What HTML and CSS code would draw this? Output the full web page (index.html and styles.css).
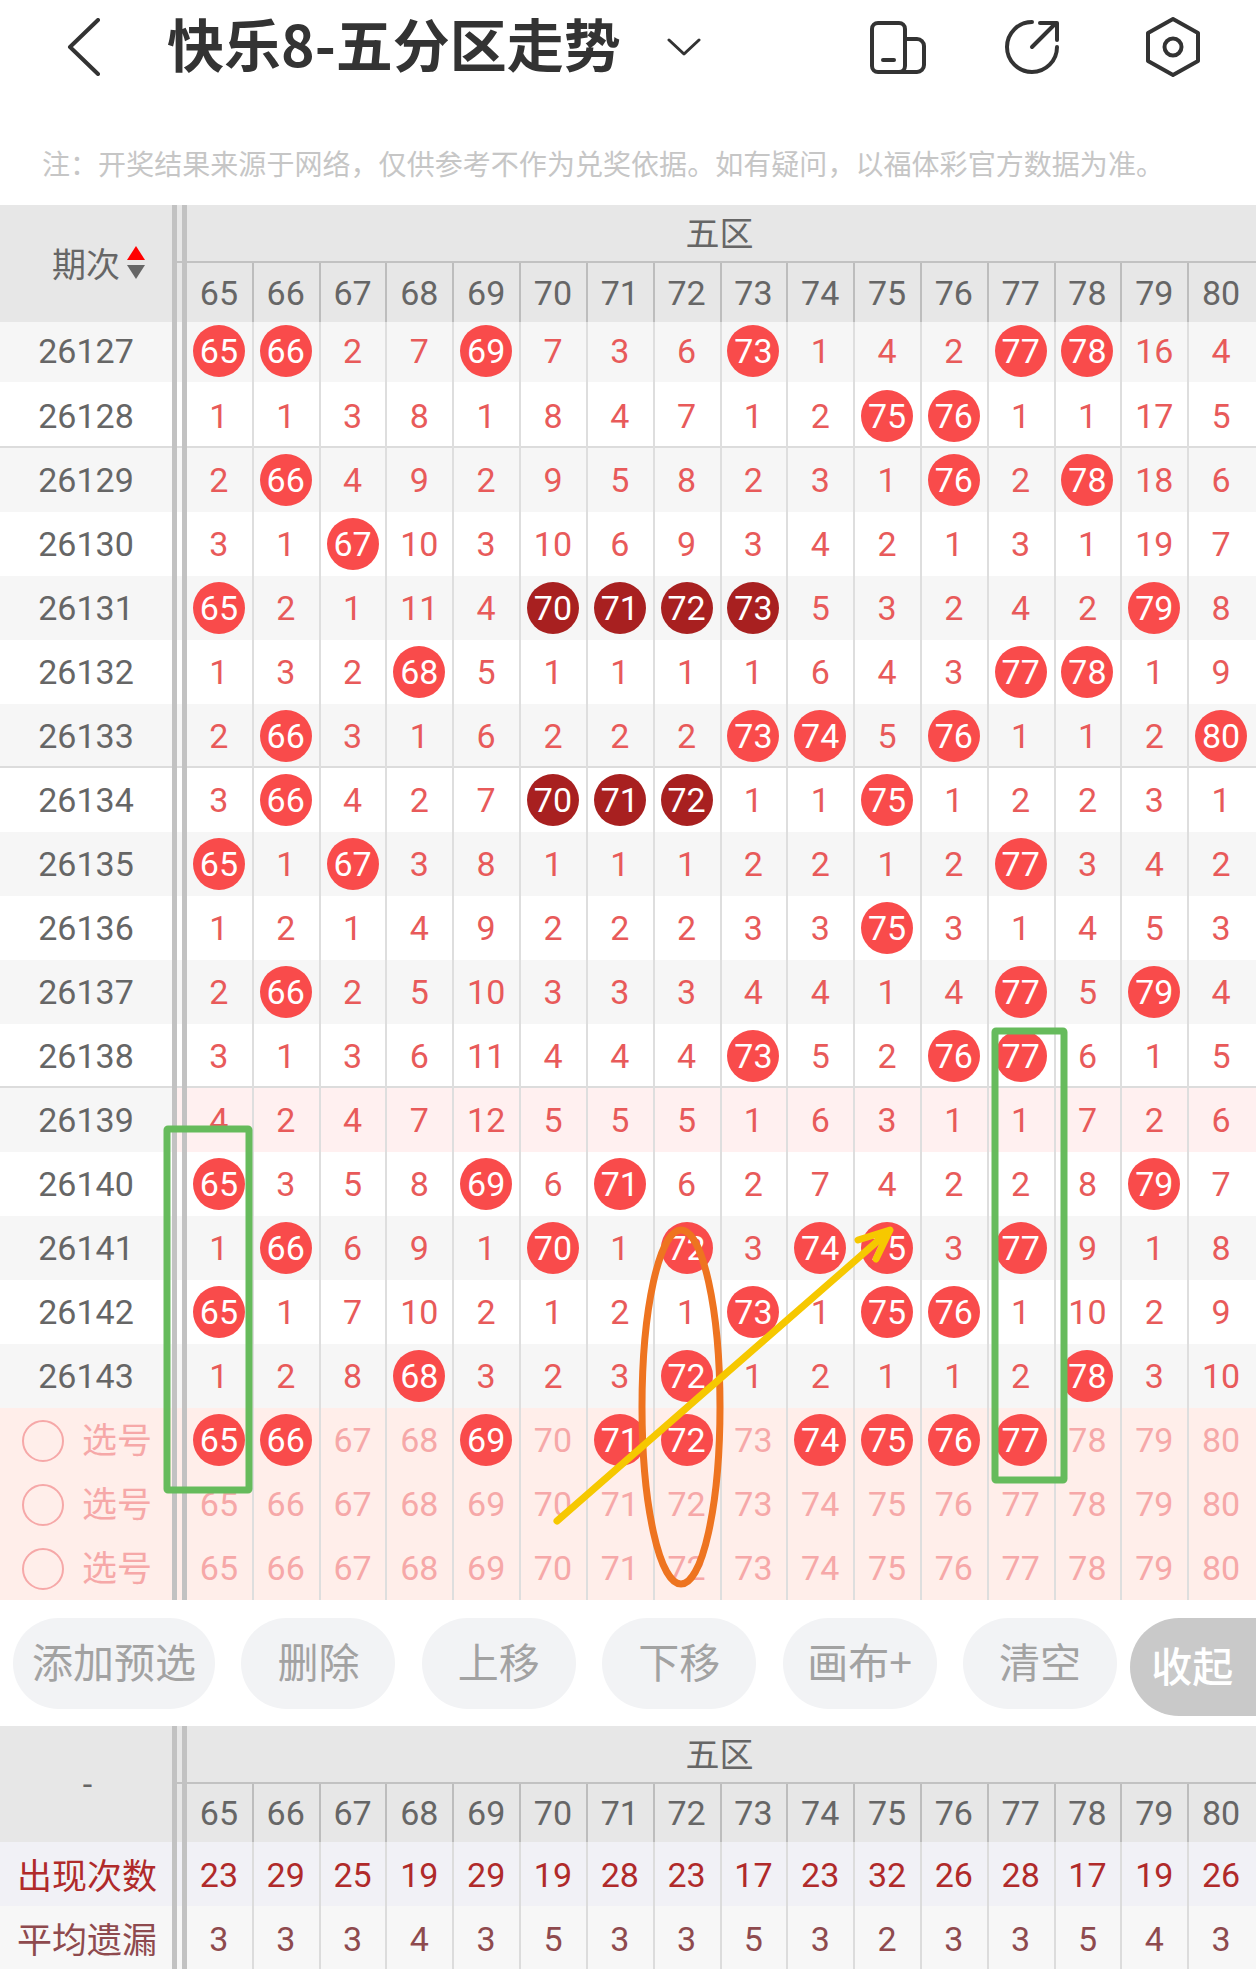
FILE: index.html
```html
<!DOCTYPE html>
<html lang="zh-CN">
<head>
<meta charset="utf-8">
<title>快乐8-五分区走势</title>
<link rel="stylesheet" href="styles.css">
</head>
<body>
<div class="page">
  <header class="top">
    <svg class="back" viewBox="0 0 34 58"><path d="M31 2 3 29l28 27"/></svg>
    <h1>快乐8-五分区走势</h1>
    <svg class="caret" viewBox="0 0 34 18"><path d="M2 2l15 14L32 2"/></svg>
    <div class="tools">
      <svg class="tool t1" viewBox="0 0 56 54"><rect x="2" y="3" width="33" height="49" rx="6"/><path d="M35 19h12a7 7 0 0 1 7 7v19a7 7 0 0 1-7 7H29"/><path d="M13 40h11"/></svg>
      <svg class="tool t2" viewBox="0 0 56 56"><path d="M28 3a25 25 0 1 0 25 25"/><path d="M28 28 52 4M36 4h17v17"/></svg>
      <svg class="tool t3" viewBox="0 0 56 60"><path d="M28 2 53 16v28L28 58 3 44V16z"/><circle cx="28" cy="30" r="8.5"/></svg>
    </div>
  </header>
  <p class="note">注：开奖结果来源于网络，仅供参考不作为兑奖依据。如有疑问，以福体彩官方数据为准。</p>

  <section class="table">
    <div class="thead tall">
      <div class="corner sorted">期次<span class="sort"><i class="up"></i><i class="down"></i></span></div>
      <div class="zone">五区</div>
      <span>65</span><span>66</span><span>67</span><span>68</span><span>69</span><span>70</span><span>71</span><span>72</span><span>73</span><span>74</span><span>75</span><span>76</span><span>77</span><span>78</span><span>79</span><span>80</span>
    </div>
    <div class="row grey first"><div class="id">26127</div><span><b>65</b></span><span><b>66</b></span><span>2</span><span>7</span><span><b>69</b></span><span>7</span><span>3</span><span>6</span><span><b>73</b></span><span>1</span><span>4</span><span>2</span><span><b>77</b></span><span><b>78</b></span><span>16</span><span>4</span></div>
    <div class="row sep second"><div class="id">26128</div><span>1</span><span>1</span><span>3</span><span>8</span><span>1</span><span>8</span><span>4</span><span>7</span><span>1</span><span>2</span><span><b>75</b></span><span><b>76</b></span><span>1</span><span>1</span><span>17</span><span>5</span></div>
    <div class="row grey"><div class="id">26129</div><span>2</span><span><b>66</b></span><span>4</span><span>9</span><span>2</span><span>9</span><span>5</span><span>8</span><span>2</span><span>3</span><span>1</span><span><b>76</b></span><span>2</span><span><b>78</b></span><span>18</span><span>6</span></div>
    <div class="row"><div class="id">26130</div><span>3</span><span>1</span><span><b>67</b></span><span>10</span><span>3</span><span>10</span><span>6</span><span>9</span><span>3</span><span>4</span><span>2</span><span>1</span><span>3</span><span>1</span><span>19</span><span>7</span></div>
    <div class="row grey"><div class="id">26131</div><span><b>65</b></span><span>2</span><span>1</span><span>11</span><span>4</span><span><b class="dark">70</b></span><span><b class="dark">71</b></span><span><b class="dark">72</b></span><span><b class="dark">73</b></span><span>5</span><span>3</span><span>2</span><span>4</span><span>2</span><span><b>79</b></span><span>8</span></div>
    <div class="row"><div class="id">26132</div><span>1</span><span>3</span><span>2</span><span><b>68</b></span><span>5</span><span>1</span><span>1</span><span>1</span><span>1</span><span>6</span><span>4</span><span>3</span><span><b>77</b></span><span><b>78</b></span><span>1</span><span>9</span></div>
    <div class="row grey sep"><div class="id">26133</div><span>2</span><span><b>66</b></span><span>3</span><span>1</span><span>6</span><span>2</span><span>2</span><span>2</span><span><b>73</b></span><span><b>74</b></span><span>5</span><span><b>76</b></span><span>1</span><span>1</span><span>2</span><span><b>80</b></span></div>
    <div class="row"><div class="id">26134</div><span>3</span><span><b>66</b></span><span>4</span><span>2</span><span>7</span><span><b class="dark">70</b></span><span><b class="dark">71</b></span><span><b class="dark">72</b></span><span>1</span><span>1</span><span><b>75</b></span><span>1</span><span>2</span><span>2</span><span>3</span><span>1</span></div>
    <div class="row grey"><div class="id">26135</div><span><b>65</b></span><span>1</span><span><b>67</b></span><span>3</span><span>8</span><span>1</span><span>1</span><span>1</span><span>2</span><span>2</span><span>1</span><span>2</span><span><b>77</b></span><span>3</span><span>4</span><span>2</span></div>
    <div class="row"><div class="id">26136</div><span>1</span><span>2</span><span>1</span><span>4</span><span>9</span><span>2</span><span>2</span><span>2</span><span>3</span><span>3</span><span><b>75</b></span><span>3</span><span>1</span><span>4</span><span>5</span><span>3</span></div>
    <div class="row grey"><div class="id">26137</div><span>2</span><span><b>66</b></span><span>2</span><span>5</span><span>10</span><span>3</span><span>3</span><span>3</span><span>4</span><span>4</span><span>1</span><span>4</span><span><b>77</b></span><span>5</span><span><b>79</b></span><span>4</span></div>
    <div class="row sep"><div class="id">26138</div><span>3</span><span>1</span><span>3</span><span>6</span><span>11</span><span>4</span><span>4</span><span>4</span><span><b>73</b></span><span>5</span><span>2</span><span><b>76</b></span><span><b>77</b></span><span>6</span><span>1</span><span>5</span></div>
    <div class="row pink"><div class="id">26139</div><span>4</span><span>2</span><span>4</span><span>7</span><span>12</span><span>5</span><span>5</span><span>5</span><span>1</span><span>6</span><span>3</span><span>1</span><span>1</span><span>7</span><span>2</span><span>6</span></div>
    <div class="row"><div class="id">26140</div><span><b>65</b></span><span>3</span><span>5</span><span>8</span><span><b>69</b></span><span>6</span><span><b>71</b></span><span>6</span><span>2</span><span>7</span><span>4</span><span>2</span><span>2</span><span>8</span><span><b>79</b></span><span>7</span></div>
    <div class="row grey"><div class="id">26141</div><span>1</span><span><b>66</b></span><span>6</span><span>9</span><span>1</span><span><b>70</b></span><span>1</span><span><b>72</b></span><span>3</span><span><b>74</b></span><span><b>75</b></span><span>3</span><span><b>77</b></span><span>9</span><span>1</span><span>8</span></div>
    <div class="row"><div class="id">26142</div><span><b>65</b></span><span>1</span><span>7</span><span>10</span><span>2</span><span>1</span><span>2</span><span>1</span><span><b>73</b></span><span>1</span><span><b>75</b></span><span><b>76</b></span><span>1</span><span>10</span><span>2</span><span>9</span></div>
    <div class="row grey"><div class="id">26143</div><span>1</span><span>2</span><span>8</span><span><b>68</b></span><span>3</span><span>2</span><span>3</span><span><b>72</b></span><span>1</span><span>2</span><span>1</span><span>1</span><span>2</span><span><b>78</b></span><span>3</span><span>10</span></div>
    <div class="row pick"><div class="id"><i class="radio"></i>选号</div><span><b>65</b></span><span><b>66</b></span><span>67</span><span>68</span><span><b>69</b></span><span>70</span><span><b>71</b></span><span><b>72</b></span><span>73</span><span><b>74</b></span><span><b>75</b></span><span><b>76</b></span><span><b>77</b></span><span>78</span><span>79</span><span>80</span></div>
    <div class="row pick"><div class="id"><i class="radio"></i>选号</div><span>65</span><span>66</span><span>67</span><span>68</span><span>69</span><span>70</span><span>71</span><span>72</span><span>73</span><span>74</span><span>75</span><span>76</span><span>77</span><span>78</span><span>79</span><span>80</span></div>
    <div class="row pick"><div class="id"><i class="radio"></i>选号</div><span>65</span><span>66</span><span>67</span><span>68</span><span>69</span><span>70</span><span>71</span><span>72</span><span>73</span><span>74</span><span>75</span><span>76</span><span>77</span><span>78</span><span>79</span><span>80</span></div>
  </section>

  <nav class="actions">
    <button class="wide">添加预选</button>
    <button>删除</button>
    <button>上移</button>
    <button>下移</button>
    <button>画布+</button>
    <button>清空</button>
    <button class="fold">收起</button>
  </nav>

  <section class="table">
    <div class="thead low">
      <div class="corner dash">-</div>
      <div class="zone">五区</div>
      <span>65</span><span>66</span><span>67</span><span>68</span><span>69</span><span>70</span><span>71</span><span>72</span><span>73</span><span>74</span><span>75</span><span>76</span><span>77</span><span>78</span><span>79</span><span>80</span>
    </div>
    <div class="row stat count"><div class="id">出现次数</div><span>23</span><span>29</span><span>25</span><span>19</span><span>29</span><span>19</span><span>28</span><span>23</span><span>17</span><span>23</span><span>32</span><span>26</span><span>28</span><span>17</span><span>19</span><span>26</span></div>
    <div class="row stat avg"><div class="id">平均遗漏</div><span>3</span><span>3</span><span>3</span><span>4</span><span>3</span><span>5</span><span>3</span><span>3</span><span>5</span><span>3</span><span>2</span><span>3</span><span>3</span><span>5</span><span>4</span><span>3</span></div>
  </section>

  <svg class="marks" viewBox="0 0 1256 1969">
    <rect class="green" x="167" y="1129" width="82" height="361" rx="1"/>
    <rect class="green" x="995" y="1031" width="69" height="449" rx="1"/>
    <ellipse class="orange" cx="681" cy="1407" rx="39" ry="177"/>
    <path class="yellow" d="M557 1521 888 1232M858 1240l32-10-14 29"/>
  </svg>
</div>
</body>
</html>
```
FILE: styles.css
```css
* { box-sizing: border-box; }
html, body { margin: 0; padding: 0; background: #fff; }
.page {
  position: relative;
  width: 1256px;
  height: 1969px;
  overflow: hidden;
  font-family: Roboto, "Noto Sans CJK SC", sans-serif;
  color: #666;
}

/* top bar */
.top { display: flex; align-items: center; height: 94px; }
.back { width: 34px; height: 58px; margin-left: 67px; flex: none; fill: none; stroke: #333; stroke-width: 4; stroke-linecap: round; stroke-linejoin: round; }
.top h1 {
  margin: 0 0 0 66px;
  padding-bottom: 9px;
  font: 700 57px/1 "Noto Sans CJK SC", sans-serif;
  color: #333;
  white-space: nowrap;
}
.caret { width: 34px; height: 18px; margin-left: 46px; flex: none; fill: none; stroke: #333; stroke-width: 3; stroke-linecap: round; stroke-linejoin: round; }
.tools { display: flex; align-items: center; margin-left: 169px; gap: 78px; }
.tool { flex: none; fill: none; stroke: #333; stroke-width: 4; stroke-linecap: round; stroke-linejoin: round; }
.t1 { width: 56px; height: 54px; }
.t2 { width: 56px; height: 56px; }
.t3 { width: 56px; height: 60px; margin-left: 7px; }

.note {
  margin: 0;
  height: 111px;
  padding: 54px 0 0 42px;
  font: 28px/30px "Noto Sans CJK SC", sans-serif;
  letter-spacing: 0.05px;
  color: #c6c6c6;
  white-space: nowrap;
}

/* tables */
.thead, .row {
  display: grid;
  grid-template-columns: 172px 15px repeat(16, minmax(0, 1fr));
}
.thead::before, .row::before {
  content: "";
  grid-column: 2;
  grid-row: 1;
  border-left: 5px solid #c2c2c2;
  border-right: 5px solid #c2c2c2;
}
.thead {
  background: #e7e7e7;
  font-size: 34px;
}
.thead.tall { height: 117px; grid-template-rows: 58px 59px; }
.thead.low { height: 116px; grid-template-rows: 58px 58px; }
.thead::before { grid-row: 1 / 3; }
.corner {
  grid-column: 1;
  grid-row: 1 / 3;
  display: flex;
  align-items: center;
  justify-content: center;
  font-size: 34px;
}
.corner.sorted { padding: 0 0 2px 25px; font-family: "Noto Sans CJK SC", sans-serif; }
.corner.dash { padding-left: 3px; }
.zone {
  grid-column: 3 / -1;
  grid-row: 1;
  margin-left: -10px;
  padding: 5px 4px 0 10px;
  border-bottom: 2px solid #c2c2c2;
  text-align: center;
  font: 34px/44px "Noto Sans CJK SC", sans-serif;
  position: relative;
}
.sort { display: flex; flex-direction: column; gap: 5px; margin-left: 7px; }
.sort i { display: block; width: 0; height: 0; border-left: 9px solid transparent; border-right: 9px solid transparent; }
.sort .up { border-bottom: 14px solid #f00; }
.sort .down { border-top: 14px solid #666; }
.thead > span {
  display: flex;
  align-items: center;
  justify-content: center;
  border-right: 2px solid #bdbdbd;
  padding-right: 1px;
}
.thead > span:last-child { border-right: 0; padding-right: 3px; }

.row {
  height: 64px;
  font-size: 34px;
  color: #e85a5a;
}
.row.first { height: 60px; }
.row.first > * { padding-bottom: 2px; }
.row.second { height: 66px; }
.row.second > * { padding-top: 2px; }
.row.grey { background: #f6f6f6; }
.row.sep { box-shadow: inset 0 -2px 0 #dcdcdc; }
.row.pink { background: #fff0f0; }
.row.pink .id { background: #f6f6f6; }
.row.pick { background: #ffeeea; color: #f6a8a8; }
.row > span {
  display: flex;
  align-items: center;
  justify-content: center;
  border-right: 2px solid #dedede;
  padding-right: 1px;
}
.row > span:last-child { border-right: 0; padding-right: 3px; }
.row b {
  display: flex;
  align-items: center;
  justify-content: center;
  width: 52px;
  height: 52px;
  border-radius: 50%;
  background: #f94b4b;
  color: #fff;
  font-weight: 400;
  flex: none;
}
.row b.dark { background: #a82020; }
.id {
  display: flex;
  align-items: center;
  justify-content: center;
  font-size: 34px;
  color: #666;
}
.pick .id { color: #f6a8a8; font: 35px/1 "Noto Sans CJK SC", sans-serif; justify-content: flex-start; padding: 0 0 6px 22px; }
.radio { flex: none; width: 42px; height: 42px; margin: 8px 18px 0 0; border: 2px solid #f6a8a8; border-radius: 50%; }

.stat.count { background: #f1f1f6; color: #b02a2a; }
.stat.avg { background: #f7f7f7; color: #8e4a4e; }
.stat .id { color: inherit; font: 35px/1 "Noto Sans CJK SC", sans-serif; padding: 0 0 2px 2px; }
.stat > span { border-right-color: #dcdcdc; padding-top: 2px; }

/* action buttons */
.actions {
  display: flex;
  align-items: flex-start;
  gap: 26.4px;
  height: 126px;
  padding: 18px 0 0 13px;
}
.actions button {
  flex: none;
  width: 154px;
  height: 91px;
  padding: 0 0 6px;
  border: 0;
  border-radius: 46px;
  background: #f2f3f5;
  color: #a2a2a2;
  font: 41px/1 "Noto Sans CJK SC", sans-serif;
}
.actions .wide { width: 202px; }
.actions .fold {
  width: 160px;
  height: 98px;
  margin-left: -13px;
  border-radius: 49px 0 0 49px;
  background: #c9c9c9;
  color: #fff;
  font-size: 41px;
  font-weight: 500;
  text-align: left;
  padding: 0 0 6px 21px;
}

/* hand-drawn annotations */
.marks { position: absolute; left: 0; top: 0; width: 1256px; height: 1969px; fill: none; pointer-events: none; }
.green { stroke: #66bb5c; stroke-width: 7; stroke-linejoin: round; }
.orange { stroke: #ee7420; stroke-width: 7; }
.yellow { stroke: #f6c800; stroke-width: 7; stroke-linecap: round; stroke-linejoin: round; }
```
